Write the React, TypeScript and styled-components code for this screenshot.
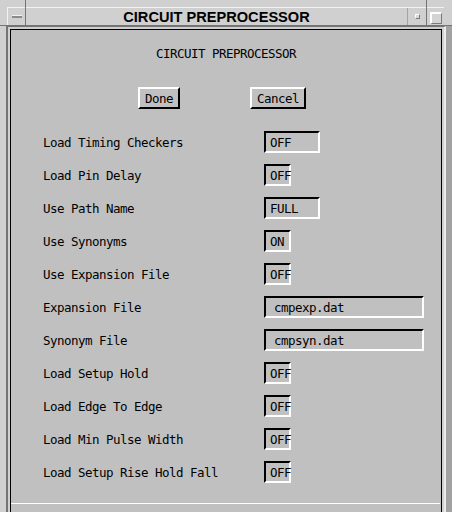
import { Fragment } from "react";
import styled, { createGlobalStyle } from "styled-components";

const FRAME = "#d0d0d0";
const SHADOW = "#747474";
const LIGHT = "#f2f2f2";
const FACE = "#c0c0c0";

const GlobalStyle = createGlobalStyle`
  html, body {
    margin: 0;
    padding: 0;
    background: ${FRAME};
  }
  body {
    font-family: "DejaVu Sans Mono", "Liberation Mono", monospace;
  }
`;

const Window = styled.div`
  width: 452px;
  height: 512px;
  overflow: hidden;
  display: flex;
  flex-direction: column;
  background: ${FRAME};
`;

const TitleArea = styled.div`
  display: flex;
  height: 26px;
  box-sizing: border-box;
  border-bottom: 1px solid ${SHADOW};
`;

const Corner = styled.div<{ $side: "left" | "right" }>`
  width: 26px;
  box-sizing: border-box;
  display: flex;
  padding-top: 7px;
  ${(p) =>
    p.$side === "left"
      ? `border-right: 1px solid ${SHADOW}; padding-left: 7px;`
      : `border-left: 1px solid ${SHADOW}; padding-right: 8px;`}
`;

const MenuButton = styled.div`
  flex: 1;
  border-top: 1px solid ${LIGHT};
  border-left: 1px solid ${LIGHT};
  display: flex;
  align-items: center;
  padding-left: 4px;
`;

const Dash = styled.div`
  width: 10px;
  height: 1px;
  background: ${LIGHT};
  border-bottom: 2px solid #8a8a8a;
`;

const TitleCenter = styled.div`
  flex: 1;
  padding-top: 7px;
  display: flex;
`;

const TitleBar = styled.div`
  flex: 1;
  display: flex;
  border-top: 1px solid ${LIGHT};
`;

const TitleText = styled.div`
  flex: 1;
  text-align: center;
  font-family: "Liberation Sans", Arial, sans-serif;
  font-weight: bold;
  font-size: 14.6px;
  line-height: 18px;
  color: #000;
`;

const MinBox = styled.div`
  width: 18px;
  border-left: 1px solid #a4a4a4;
  display: flex;
  align-items: center;
  justify-content: center;
`;

const SmallSquare = styled.div`
  width: 3px;
  height: 3px;
  background: #d8d8d8;
  border-top: 1px solid #fff;
  border-left: 1px solid #fff;
  border-right: 1px solid #7a7a7a;
  border-bottom: 1px solid #7a7a7a;
`;

const MaxButton = styled.div`
  flex: 1;
  border-top: 1px solid ${LIGHT};
  display: flex;
  align-items: flex-end;
  justify-content: center;
  padding-bottom: 1px;
`;

const BigSquare = styled.div`
  width: 9px;
  height: 9px;
  background: #d4d4d4;
  border-top: 2px solid #fff;
  border-left: 2px solid #fff;
  border-right: 1px solid #7a7a7a;
  border-bottom: 1px solid #7a7a7a;
`;

const Body = styled.div`
  flex: 1;
  display: flex;
  padding-left: 6px;
  border-right: 6px solid #a2a2a2;
  min-height: 0;
`;

const Client = styled.div`
  flex: 1;
  display: flex;
  border-left: 2px solid ${SHADOW};
  border-top: 1px solid ${SHADOW};
  border-right: 2px solid #ececec;
  padding: 2px 2px 0 2px;
`;

const Dialog = styled.div`
  flex: 1;
  display: flex;
  flex-direction: column;
  border: 1px solid #000;
  border-bottom: none;
  background: ${FACE};
  color: #000;
  font-size: 12.5px;
  letter-spacing: -0.53px;
`;

const Heading = styled.div`
  margin-top: 17px;
  line-height: 14px;
  text-align: center;
`;

const ButtonRow = styled.div`
  display: flex;
  gap: 70px;
  margin-top: 26px;
  padding-left: 127px;
`;

const PushButton = styled.div`
  height: 22px;
  box-sizing: border-box;
  padding: 0 5px;
  display: flex;
  align-items: center;
  border-top: 2px solid #fff;
  border-left: 2px solid #fff;
  border-right: 2px solid #000;
  border-bottom: 2px solid #000;
`;

const Form = styled.div`
  display: grid;
  grid-template-columns: 221px auto;
  grid-auto-rows: 22px;
  row-gap: 11px;
  margin-top: 22px;
  padding-left: 32px;
`;

const Label = styled.div`
  display: flex;
  align-items: center;
`;

const Field = styled.div<{ $width: number; $pad: number }>`
  width: ${(p) => p.$width}px;
  height: 22px;
  box-sizing: border-box;
  padding-left: ${(p) => p.$pad}px;
  display: flex;
  align-items: center;
  white-space: nowrap;
  border-top: 2px solid #000;
  border-left: 2px solid #000;
  border-right: 2px solid #fff;
  border-bottom: 2px solid #fff;
`;

const Separator = styled.div`
  margin-top: 20px;
  height: 1px;
  background: #fff;
  margin-right: 1px;
`;

type Row = { label: string; value: string; kind: "short" | "wide" | "file" };

const rows: Row[] = [
  { label: "Load Timing Checkers", value: "OFF", kind: "wide" },
  { label: "Load Pin Delay", value: "OFF", kind: "short" },
  { label: "Use Path Name", value: "FULL", kind: "wide" },
  { label: "Use Synonyms", value: "ON", kind: "short" },
  { label: "Use Expansion File", value: "OFF", kind: "short" },
  { label: "Expansion File", value: "cmpexp.dat", kind: "file" },
  { label: "Synonym File", value: "cmpsyn.dat", kind: "file" },
  { label: "Load Setup Hold", value: "OFF", kind: "short" },
  { label: "Load Edge To Edge", value: "OFF", kind: "short" },
  { label: "Load Min Pulse Width", value: "OFF", kind: "short" },
  { label: "Load Setup Rise Hold Fall", value: "OFF", kind: "short" },
];

const widths = { short: 27, wide: 56, file: 160 };

export default function App() {
  return (
    <>
      <GlobalStyle />
      <Window>
        <TitleArea>
          <Corner $side="left">
            <MenuButton>
              <Dash />
            </MenuButton>
          </Corner>
          <TitleCenter>
            <TitleBar>
              <TitleText>CIRCUIT PREPROCESSOR</TitleText>
              <MinBox>
                <SmallSquare />
              </MinBox>
            </TitleBar>
          </TitleCenter>
          <Corner $side="right">
            <MaxButton>
              <BigSquare />
            </MaxButton>
          </Corner>
        </TitleArea>
        <Body>
          <Client>
            <Dialog>
              <Heading>CIRCUIT PREPROCESSOR</Heading>
              <ButtonRow>
                <PushButton>Done</PushButton>
                <PushButton>Cancel</PushButton>
              </ButtonRow>
              <Form>
                {rows.map((r) => (
                  <Fragment key={r.label}>
                    <Label>{r.label}</Label>
                    <Field
                      $width={widths[r.kind]}
                      $pad={r.kind === "file" ? 8 : 4}
                    >
                      {r.value}
                    </Field>
                  </Fragment>
                ))}
              </Form>
              <Separator />
            </Dialog>
          </Client>
        </Body>
      </Window>
    </>
  );
}
